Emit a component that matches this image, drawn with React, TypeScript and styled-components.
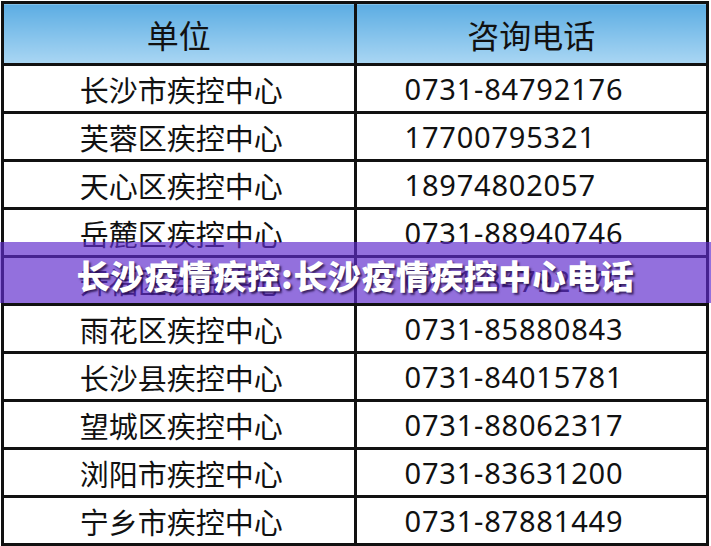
import styled, { createGlobalStyle } from 'styled-components'

const GlobalStyle = createGlobalStyle`
  html, body {
    margin: 0;
    padding: 0;
    background: #fff;
  }
  body {
    font-family: 'Noto Sans', 'Noto Sans CJK SC', sans-serif;
  }
`

const rows = [
  { unit: '长沙市疾控中心', phone: '0731-84792176' },
  { unit: '芙蓉区疾控中心', phone: '17700795321' },
  { unit: '天心区疾控中心', phone: '18974802057' },
  { unit: '岳麓区疾控中心', phone: '0731-88940746' },
  { unit: '开福区疾控中心', phone: '0731-84792176' },
  { unit: '雨花区疾控中心', phone: '0731-85880843' },
  { unit: '长沙县疾控中心', phone: '0731-84015781' },
  { unit: '望城区疾控中心', phone: '0731-88062317' },
  { unit: '浏阳市疾控中心', phone: '0731-83631200' },
  { unit: '宁乡市疾控中心', phone: '0731-87881449' },
]

const App = () => {
  return (
    <>
      <GlobalStyle />
      <Page>
        <Table>
          <thead>
            <tr>
              <HeadCell>单位</HeadCell>
              <HeadCell>咨询电话</HeadCell>
            </tr>
          </thead>
          <tbody>
            {rows.map((r, i) => (
              <Row key={i}>
                <UnitCell>{r.unit}</UnitCell>
                <PhoneCell>{r.phone}</PhoneCell>
              </Row>
            ))}
          </tbody>
        </Table>
        <Banner>
          <BannerText>长沙疫情疾控:长沙疫情疾控中心电话</BannerText>
        </Banner>
      </Page>
    </>
  )
}
export default App

const Page = styled.div`
  position: relative;
  width: 711px;
  height: 546px;
  overflow: hidden;
  padding: 1px 0 0 1px;
  box-sizing: border-box;
`
const Table = styled.table`
  border-collapse: collapse;
  width: 708px;
  table-layout: fixed;
  border: 3px solid #111;

  td, th {
    border: 3px solid #111;
  }
`
const HeadCell = styled.th`
  height: 59px;
  padding: 0;
  font-family: 'Noto Sans CJK SC', sans-serif;
  font-weight: 400;
  font-size: 32px;
  color: #111;
  text-align: center;
  background: linear-gradient(to bottom, #5cade3, #a9d6f3);
  width: 50%;
`
const Row = styled.tr`
  height: 48px;
`
const UnitCell = styled.td`
  padding: 0 0 0 5px;
  font-family: 'Noto Sans CJK SC', sans-serif;
  font-size: 29px;
  color: #111;
  text-align: center;
  line-height: 44px;
`
const PhoneCell = styled.td`
  padding: 0 0 0 48px;
  font-family: 'Noto Sans', 'Open Sans', sans-serif;
  font-size: 29px;
  letter-spacing: 0.8px;
  color: #111;
  text-align: left;
  line-height: 44px;
`
const Banner = styled.div`
  position: absolute;
  left: 0;
  right: 0;
  top: 242px;
  height: 61px;
  background: rgba(96, 44, 205, 0.68);
  display: flex;
  align-items: center;
  justify-content: center;
`
const BannerText = styled.div`
  font-family: 'Noto Sans CJK SC', sans-serif;
  font-weight: 900;
  font-size: 33.5px;
  color: #fff;
  letter-spacing: 0.6px;
  text-shadow: 2px 2px 2px rgba(30, 10, 60, 0.75);
  margin-top: 4px;
`
